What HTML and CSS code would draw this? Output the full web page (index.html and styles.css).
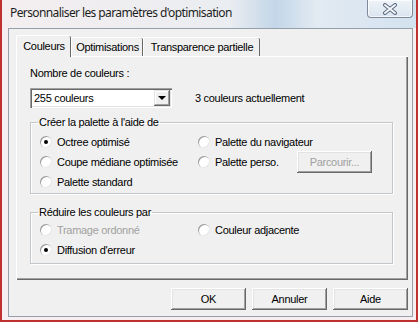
FILE: index.html
```html
<!DOCTYPE html>
<html lang="fr">
<head>
	<meta charset="UTF-8">
	<title>Personnaliser les paramètres d'optimisation</title>
	<link rel="stylesheet" href="styles.css">
</head>
<body>
	<div id="fenetre">
		<div id="titre">
			<span id="titre-texte">Personnaliser les paramètres d'optimisation</span>
			<a id="fermer">
				<svg width="16" height="12" viewBox="0 0 16 12">
					<path d="M3 2 L13 10 M13 2 L3 10" stroke="#5d6d80" stroke-width="4" stroke-linecap="round" fill="none"/>
					<path d="M3 2 L13 10 M13 2 L3 10" stroke="#f4f7fb" stroke-width="2" stroke-linecap="round" fill="none"/>
				</svg>
			</a>
		</div>
		<div id="client">
			<ul id="onglets">
				<li class="onglet actif" id="onglet-couleurs">Couleurs</li>
				<li class="onglet" id="onglet-optimisations">Optimisations</li>
				<li class="onglet" id="onglet-transparence">Transparence partielle</li>
			</ul>
			<div id="panneau">
				<div id="nombre-titre">Nombre de couleurs :</div>
				<div id="nombre-ligne">
					<div class="liste">
						<span class="liste-valeur">255 couleurs</span>
						<span class="liste-fleche"></span>
					</div>
					<span id="nombre-actuel">3 couleurs actuellement</span>
				</div>
				<fieldset class="groupe" id="groupe-palette">
					<legend>Créer la palette à l'aide de</legend>
					<div class="choix"><span class="radio coche"></span>Octree optimisé</div>
					<div class="choix"><span class="radio"></span>Palette du navigateur</div>
					<div class="choix"><span class="radio"></span>Coupe médiane optimisée</div>
					<div class="choix"><span class="radio"></span>Palette perso.<a class="bouton inactif" id="parcourir">Parcourir...</a></div>
					<div class="choix"><span class="radio"></span>Palette standard</div>
				</fieldset>
				<fieldset class="groupe" id="groupe-reduire">
					<legend>Réduire les couleurs par</legend>
					<div class="choix inactif"><span class="radio"></span>Tramage ordonné</div>
					<div class="choix"><span class="radio"></span>Couleur adjacente</div>
					<div class="choix"><span class="radio coche"></span>Diffusion d'erreur</div>
				</fieldset>
			</div>
			<div id="boutons">
				<a class="bouton">OK</a>
				<a class="bouton">Annuler</a>
				<a class="bouton">Aide</a>
			</div>
		</div>
	</div>
</body>
</html>
```

FILE: styles.css
```css
*{
	box-sizing: border-box;
}

body{
	margin: 0;
	width: 418px;
	height: 322px;
	overflow: hidden;
	font-family: "Liberation Sans", Arial, sans-serif;
	font-size: 11px;
	letter-spacing: -0.3px;
	color: #000;
}

#fenetre{
	display: flex;
	flex-direction: column;
	height: 322px;
	border: solid #c0302f;
	border-width: 0 2px 2px 2px;
	padding-bottom: 3px;
	background: #f6eef0;
}

#titre{
	display: flex;
	justify-content: space-between;
	align-items: flex-start;
	height: 28px;
	padding-left: 8px;
	background: linear-gradient(90deg, #f4eef0 0%, #eaedf1 55%, #c3d6e8 66%, #e2eaf2 76%, #d3e2f0 100%);
}

#titre-texte{
	font-family: "Noto Sans", sans-serif;
	font-size: 12px;
	letter-spacing: -0.6px;
	line-height: 16px;
	padding-top: 5px;
	color: #1e1e1e;
}

#fermer{
	display: flex;
	align-items: center;
	justify-content: center;
	width: 46px;
	height: 18px;
	margin-right: 3px;
	border: 1px solid #7d8a99;
	border-top: none;
	border-radius: 0 0 4px 4px;
	background: linear-gradient(#eef3f8, #dbe5ef);
	box-shadow: inset 0 0 0 1px rgba(255,255,255,.7);
}

#client{
	flex-grow: 1;
	display: flex;
	flex-direction: column;
	margin: 0 3px 0 6px;
	padding: 6px 4px 0 7px;
	border: 1px solid #95a0aa;
	background: #f0f0f0;
}

ul#onglets{
	display: flex;
	align-items: flex-end;
	list-style: none;
	height: 21px;
	margin: 0;
	padding: 0;
	position: relative;
	z-index: 1;
}

.onglet{
	height: 19px;
	padding-top: 3px;
	text-align: center;
	border-top: 1px solid #fff;
	border-left: 1px solid #fff;
	box-shadow: inset -1px 0 0 #696969;
	border-radius: 2px 2px 0 0;
	background: #f0f0f0;
}

.onglet.actif{
	height: 22px;
	margin-bottom: -1px;
	padding-top: 4px;
}

#onglet-couleurs{
	width: 55px;
}

#onglet-optimisations{
	width: 72px;
}

#onglet-transparence{
	width: 117px;
}

#panneau{
	display: flex;
	flex-direction: column;
	width: 392px;
	height: 224px;
	padding: 10px 0 0 13px;
	border-top: 1px solid #fff;
	border-left: 1px solid #fff;
	box-shadow: inset -1px -1px 0 #696969, inset -2px -2px 0 #a0a0a0;
}

#nombre-titre{
	line-height: 13px;
}

#nombre-ligne{
	display: flex;
	align-items: center;
	margin-top: 8px;
	height: 20px;
}

.liste{
	display: flex;
	align-items: center;
	justify-content: space-between;
	width: 142px;
	height: 20px;
	padding: 2px 2px 2px 4px;
	background: #fff;
	box-shadow: inset 1px 1px 0 #a0a0a0, inset 2px 2px 0 #696969, inset -1px -1px 0 #fff, inset -2px -2px 0 #e3e3e3;
}

.liste-fleche{
	position: relative;
	width: 16px;
	height: 16px;
	background: #f0f0f0;
	box-shadow: inset -1px -1px 0 #696969, inset 1px 1px 0 #e3e3e3, inset -2px -2px 0 #a0a0a0, inset 2px 2px 0 #fff;
}

.liste-fleche:after{
	content: "";
	position: absolute;
	left: 4px;
	top: 6px;
	border-left: 4px solid transparent;
	border-right: 4px solid transparent;
	border-top: 4px solid #000;
}

#nombre-actuel{
	margin-left: 23px;
}

fieldset.groupe{
	display: grid;
	grid-template-columns: 158px 1fr;
	grid-auto-rows: 19px;
	row-gap: 1px;
	width: 363px;
	margin: 0;
	min-width: 0;
	padding: 3px 0 2px 9px;
	border: 1px solid #c2c7cc;
	box-shadow: 1px 1px 0 #fff, inset 1px 1px 0 #fff;
}

fieldset.groupe legend{
	margin-left: -2px;
	padding: 0 1px;
	line-height: 13px;
}

#groupe-palette{
	margin-top: 8px;
}

#groupe-reduire{
	margin-top: 12px;
	padding: 1px 0 4px 9px;
}

.choix{
	display: flex;
	align-items: center;
	white-space: nowrap;
}

.choix.inactif{
	color: #a0a0a0;
}

.radio{
	position: relative;
	width: 12px;
	height: 12px;
	margin-right: 5px;
	border-radius: 50%;
	background: #fff;
	box-shadow: inset 1px 1px 0 #9c9c9c, inset -1px -1px 0 #e8e8e8;
}

.radio.coche:after{
	content: "";
	position: absolute;
	left: 4px;
	top: 4px;
	width: 4px;
	height: 4px;
	border-radius: 50%;
	background: #000;
}

.bouton{
	display: flex;
	align-items: center;
	justify-content: center;
	width: 75px;
	height: 22px;
	background: #f0f0f0;
	box-shadow: inset -1px -1px 0 #696969, inset 1px 1px 0 #fff, inset -2px -2px 0 #a0a0a0, inset 2px 2px 0 #e3e3e3;
}

.bouton.inactif{
	color: #a0a0a0;
}

#parcourir{
	margin: -1px 20px -2px auto;
}

#boutons{
	display: flex;
	justify-content: flex-end;
	gap: 6px;
	margin-top: 8px;
}
```
